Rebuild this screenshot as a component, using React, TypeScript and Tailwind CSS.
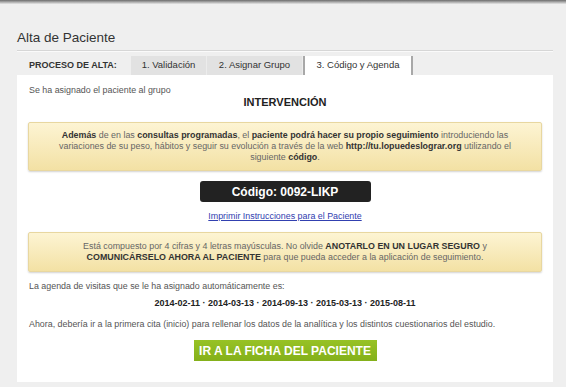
import React from 'react';

const ff = { fontFamily: '"Liberation Sans", Arial, sans-serif' };

const Tab: React.FC<{ label: string; active?: boolean; w: string }> = ({ label, active, w }) =>
  active ? (
    <div className={`${w} h-[19px] flex items-center justify-center bg-white border-x-2 border-[#a8a8a8] text-[9.5px] text-[#333]`}>
      {label}
    </div>
  ) : (
    <div className={`${w} h-[19px] flex items-center justify-center bg-[#e2e2e2] border-r border-[#ececec] text-[9.5px] text-[#333]`}>
      {label}
    </div>
  );

const YellowBox: React.FC<{ children: React.ReactNode; h: string }> = ({ children, h }) => (
  <div
    className={`mx-[11px] ${h} flex items-center justify-center text-center rounded-[2px] border border-[#e8d7a0] bg-gradient-to-b from-[#fdf4d3] to-[#f3e1a4] shadow-[0_1px_2px_rgba(0,0,0,0.18)] text-[8.9px] leading-[11px] text-[#666]`}
  >
    <div>{children}</div>
  </div>
);

const App: React.FC = () => {
  const dates = ['2014-02-11', '2014-03-13', '2014-09-13', '2015-03-13', '2015-08-11'];

  return (
    <div className="w-[566px] h-[387px] bg-[#efefef] overflow-hidden" style={ff}>
      {/* top shadow */}
      <div className="h-[4px] bg-gradient-to-b from-[#6d6d6d] via-[#a9a9a9] to-[#e6e6e6]" />

      <div className="pl-[17px] pr-[13px]">
        <h1 className="pt-[26px] h-[46px] text-[13.5px] leading-[16px] text-[#333]">Alta de Paciente</h1>
        <div className="border-b border-[#d6d6d6] shadow-[0_1px_0_#fafafa]" />

        {/* tabs */}
        <div className="mt-[5px] flex items-end">
          <div className="w-[114px] h-[19px] pl-[12px] flex items-center text-[9px] font-bold text-[#333]">PROCESO DE ALTA:</div>
          <Tab w="w-[76px]" label="1. Validación" />
          <Tab w="w-[96px]" label="2. Asignar Grupo" />
          <Tab w="w-[110px]" label="3. Código y Agenda" active />
        </div>

        {/* panel */}
        <div className="bg-white h-[307px] pt-[10px]">
          <p className="pl-[12px] text-[8.9px] leading-[11px] text-[#555]">Se ha asignado el paciente al grupo</p>
          <p className="text-center text-[11px] leading-[13px] font-bold text-[#222]">INTERVENCIÓN</p>

          <div className="mt-[13px]">
            <YellowBox h="h-[49px]">
              <b className="text-[#333]">Además</b> de en las <b className="text-[#333]">consultas programadas</b>, el{' '}
              <b className="text-[#333]">paciente podrá hacer su propio seguimiento</b> introduciendo las
              <br />
              variaciones de su peso, hábitos y seguir su evolución a través de la web{' '}
              <b className="text-[#333]">http://tu.lopuedeslograr.org</b> utilizando el
              <br />
              siguiente <b className="text-[#333]">código</b>.
            </YellowBox>
          </div>

          <div className="mt-[10px] flex justify-center">
            <div className="w-[171px] h-[21px] rounded-[3px] bg-[#222] flex items-center justify-center text-white text-[12px] font-bold">
              Código: 0092-LIKP
            </div>
          </div>

          <p className="mt-[9px] text-center text-[8.9px] leading-[11px]">
            <a href="#" className="text-[#3140b0] underline">Imprimir Instrucciones para el Paciente</a>
          </p>

          <div className="mt-[10px]">
            <YellowBox h="h-[40px]">
              Está compuesto por 4 cifras y 4 letras mayúsculas. No olvide{' '}
              <b className="text-[#333]">ANOTARLO EN UN LUGAR SEGURO</b> y
              <br />
              <b className="text-[#333]">COMUNICÁRSELO AHORA AL PACIENTE</b> para que pueda acceder a la aplicación de seguimiento.
            </YellowBox>
          </div>

          <p className="mt-[9px] pl-[12px] text-[8.9px] leading-[11px] text-[#555]">
            La agenda de visitas que se le ha asignado automáticamente es:
          </p>
          <p className="mt-[6px] text-center text-[9px] leading-[11px] font-bold text-[#222]">{dates.join(' · ')}</p>
          <p className="mt-[10px] pl-[12px] text-[8.9px] leading-[11px] text-[#555]">
            Ahora, debería ir a la primera cita (inicio) para rellenar los datos de la analítica y los distintos cuestionarios del estudio.
          </p>

          <div className="mt-[10px] flex justify-center">
            <button className="w-[183px] h-[21px] bg-gradient-to-b from-[#97c225] to-[#84b01a] text-white text-[12px] font-bold">
              IR A LA FICHA DEL PACIENTE
            </button>
          </div>
        </div>
      </div>
    </div>
  );
};

export default App;
